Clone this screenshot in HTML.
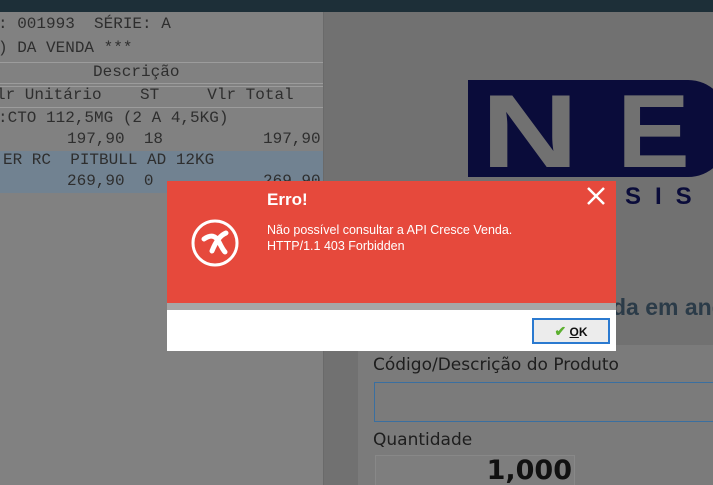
<!DOCTYPE html>
<html><head><meta charset="utf-8"><style>
*{margin:0;padding:0;box-sizing:border-box}
html,body{width:713px;height:485px;overflow:hidden}
body{background:#717171;position:relative;font-family:"Liberation Sans",sans-serif}
.abs{position:absolute}
.mono{font-family:"Liberation Mono",monospace;font-size:16px;color:#2e2e2e;white-space:pre;position:absolute}
.hl{background:#718291}
.ln{position:absolute;left:0;width:323px;height:1px;background:#9c9c9c}
</style></head><body>
<div class="abs" style="left:0;top:0;width:713px;height:12px;background:#1d2f38"></div>
<div class="abs" style="left:0;top:12px;width:324px;height:473px;background:#818181"></div>
<div class="abs" style="left:323px;top:12px;width:1px;height:473px;background:#6a6a6a"></div>
<div class="abs hl" style="left:0;top:151px;width:323px;height:42px"></div>
<div class="ln" style="top:62px"></div>
<div class="ln" style="top:83px"></div>
<div class="ln" style="top:86px"></div>
<div class="ln" style="top:107px"></div>
<div class="mono" style="left:-2px;top:15px">: 001993  SÉRIE: A</div>
<div class="mono" style="left:-2px;top:39px">) DA VENDA ***</div>
<div class="mono" style="left:93px;top:63px">Descrição</div>
<div class="mono" style="left:-4px;top:86px">lr Unitário    ST     Vlr Total</div>
<div class="mono" style="left:-2px;top:109px">:CTO 112,5MG (2 A 4,5KG)</div>
<div class="mono" style="left:67px;top:130px">197,90  18</div>
<div class="mono" style="left:263px;top:130px">197,90</div>
<div class="mono" style="left:3px;top:151px">ER RC  PITBULL AD 12KG</div>
<div class="mono" style="left:67px;top:172px">269,90  0</div>
<div class="mono" style="left:263px;top:172px">269,90</div>

<div class="abs" style="left:468px;top:80px;width:260px;height:97px;background:#0a0c3a;border-radius:0 40px 40px 0"></div>
<div class="abs" style="left:481px;top:80px;font:bold 104px/1 'Liberation Sans',sans-serif;color:#717171;transform:scaleX(1.3);transform-origin:0 0">N</div>
<div class="abs" style="left:617px;top:80px;font:bold 104px/1 'Liberation Sans',sans-serif;color:#717171;transform:scaleX(1.05);transform-origin:0 0">E</div>
<div class="abs" style="left:625px;top:185px;font:bold 24px/1 'Liberation Sans',sans-serif;color:#0a0c3a;letter-spacing:14px">SIS</div>
<div class="abs" style="left:612px;top:296px;font:bold 23px/1 'Liberation Sans',sans-serif;color:#2b3b48;white-space:nowrap">da em and</div>

<div class="abs" style="left:358px;top:345px;width:355px;height:140px;background:#7b7b7b"></div>
<div class="abs" style="left:373px;top:355px;font-size:17px;color:#1e1e1e;font-family:'DejaVu Sans',sans-serif">Código/Descrição do Produto</div>
<div class="abs" style="left:374px;top:382px;width:345px;height:40px;border:1px solid #3a6fa0;background:#7b7b7b"></div>
<div class="abs" style="left:373px;top:430px;font-size:17px;color:#1e1e1e;font-family:'DejaVu Sans',sans-serif">Quantidade</div>
<div class="abs" style="left:375px;top:455px;width:200px;height:30px;border:1px solid #888;border-bottom:none;background:#7e7e7e"></div>
<div class="abs" style="left:470px;top:457px;width:102px;text-align:right;font:bold 27px/1 'DejaVu Sans',sans-serif;color:#111">1,000</div>

<div class="abs" style="left:167px;top:181px;width:449px;height:122px;background:#e6493c"></div>
<div class="abs" style="left:167px;top:303px;width:449px;height:7px;background:#a6a6a6"></div>
<div class="abs" style="left:167px;top:310px;width:449px;height:41px;background:#fff"></div>
<svg class="abs" style="left:190px;top:218px" width="50" height="50" viewBox="0 0 50 50"><circle cx="25" cy="25" r="22" fill="none" stroke="#fff" stroke-width="3"/><path d="M14 21 Q24 14 29 24 Q33 32 35 34 M36 15 Q28 18 22 33" fill="none" stroke="#fff" stroke-width="5" stroke-linecap="round"/></svg>
<div class="abs" style="left:267px;top:191px;font:bold 17px/1 'Liberation Sans',sans-serif;color:#fff">Erro!</div>
<div class="abs" style="left:267px;top:222px;font-size:12.5px;line-height:16px;color:#fff">Não possível consultar a API Cresce Venda.<br>HTTP/1.1 403 Forbidden</div>
<svg class="abs" style="left:586px;top:186px" width="20" height="20"><path d="M2 2L18 18M18 2L2 18" stroke="#fff" stroke-width="2.5"/></svg>
<div class="abs" style="left:532px;top:318px;width:78px;height:26px;border:2px solid #2b7ad0;background:#ececec;font:bold 12px/22px 'Liberation Sans',sans-serif;color:#111;text-align:center"><span style="color:#5cb030;font-size:14px">✔</span> <u>O</u>K</div>
</body></html>
